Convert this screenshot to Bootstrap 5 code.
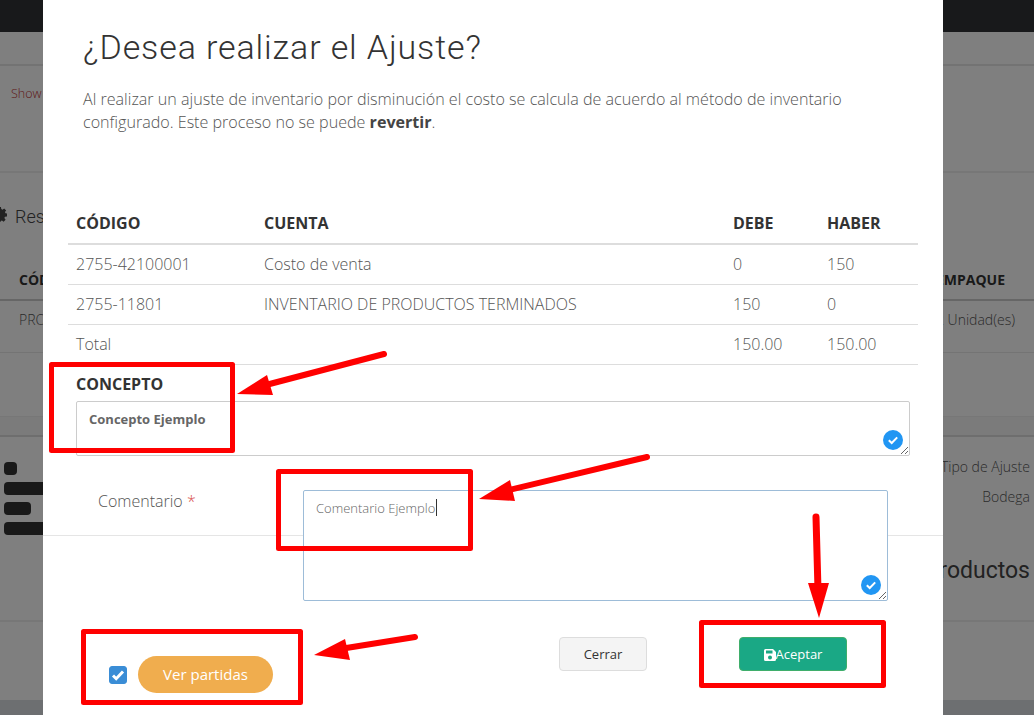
<!DOCTYPE html>
<html lang="es">
<head>
<meta charset="utf-8">
<title>Ajuste</title>
<link href="https://cdn.jsdelivr.net/npm/bootstrap@5.3.0/dist/css/bootstrap.min.css" rel="stylesheet">
<style>
html,body{height:715px;overflow:hidden}
body{font-family:"Open Sans",sans-serif;background:#fff;color:#555;font-weight:300}
.bar-top{height:32px;background:#303236}
.zone{border-bottom:1px solid #eee;padding-left:19px;padding-right:4px}
.zone-a{height:34px;border-bottom-color:#e6e6e6;border-bottom-width:2px}
.zone-b{height:107px;padding-top:19px;padding-left:11px;color:#c03030;font-size:12.5px;font-weight:300;border-bottom:2px solid #eee}
.zone-c{height:92px;padding-top:30px;padding-left:15px;font-family:Roboto,sans-serif;font-size:18px;color:#444;border:0;position:relative}
.zone-d{height:36px;font-weight:700;font-size:14px;line-height:16px;color:#333;border-bottom:2px solid #ccc;padding-top:7px;padding-right:29px}
.zone-e{height:52px;font-size:14px;padding-top:8px;padding-right:19px;color:#555;border-bottom:1px solid #e8e8e8}
.zone-f{height:64px;border-bottom:1px solid #eee}
.zone-g{height:20px;background:#f7f7f7;border-bottom:2px solid #ddd}
.zone-h{height:185px;padding:0 4px;border-bottom:2px solid #eee;color:#555;font-size:14px}
.zone-i{height:78px;border:0}
.zone-j{height:15px;background:#dadee2}
.blot-stack{gap:7px;padding-top:25px}
.blot{height:13px;background:#333;border-radius:4px}
.blot-a{width:13px}.blot-b{width:60px}.blot-c{width:27px}
.big-word{font-family:Roboto,sans-serif;font-size:23px;font-weight:400;color:#444;text-align:right;padding-top:44px;line-height:30px}
.side-right{text-align:right;line-height:30px;margin-top:-1px}
.gear{position:absolute;left:-8px;top:34px}

.modal.sheet{overflow:hidden}
.sheet .modal-dialog{width:900px;max-width:900px;margin:0 0 0 43px}
.sheet .modal-content{border:0;border-radius:0;height:715px;padding-top:25px;overflow:hidden}
.title-block{padding:0 40px}
.sheet-title{font-family:Roboto,sans-serif;font-weight:300;font-size:34px;line-height:44px;letter-spacing:.88px;color:#333;margin:0 0 19px}
.sheet-lead{font-size:16.1px;line-height:23px;margin:0;color:#555;font-weight:300}
.sheet-lead b{font-weight:700;color:#444}
.grid-wrap{padding:0 25px;margin-top:69px}
.ledger{margin:0;width:850px;table-layout:fixed;font-size:16px;color:#555;--bs-table-color:#555}
.ledger th{font-weight:700;color:#333;border-bottom:2px solid #ddd;padding:8px;line-height:24px;height:40px}
.ledger td{padding:8px;line-height:23px;border-bottom:1px solid #ddd;font-weight:300;height:40px}
.concept-block{padding:9px 33px 0}
.concept-label{font-weight:700;font-size:16px;line-height:20px;color:#333;margin-bottom:7px}
.field{position:relative}
.field textarea{display:block;width:100%;border:1px solid #ccc;border-radius:2px;outline:0;font-family:"Open Sans",sans-serif;color:#666;font-size:13px;padding:8px 12px}
.concept-box{height:55px;font-weight:700}
.comment-row{height:80px;border-bottom:1px solid #e5e5e5;display:flex;padding-top:34px;margin-top:0}
.comment-label{width:260px;padding:1px 0 0 55px;font-size:16px;line-height:20px;color:#555;font-weight:300}
.comment-label span{color:#d9534f}
.comment-field{width:585px;height:111px;flex:none}
.comment-box{height:111px;border-color:#9dbcd8!important;color:#666!important;font-weight:300}
.tick{position:absolute;right:7px;bottom:6px}
.caret-mark{position:absolute;left:133px;top:9px;width:1px;height:17px;background:#333}
.action-row{display:flex;align-items:flex-start;padding:101px 0 0 66px}
.check-box.form-check-input{width:18px;height:18px;margin:29px 11px 0 0;background-color:#3a8dd6;border-color:#3a8dd6;border-radius:3px;background-size:14px;background-image:url("data:image/svg+xml,%3Csvg xmlns='http://www.w3.org/2000/svg' viewBox='0 0 14 14'%3E%3Cpath d='M2 7.500l3.200 3.200L12 3.500' fill='none' stroke='%23fff' stroke-width='3'/%3E%3C/svg%3E")}
.pill-btn{width:135px;height:37px;margin-top:19px;background:#f0ad4e;border:0;border-radius:19px;color:#fff;font-size:15px;font-weight:400;padding:0}
.close-btn{width:88px;height:34px;margin-left:286px;background:#f4f4f4;border:1px solid #ddd;border-radius:4px;color:#333;font-size:13px;font-weight:400;padding:1px 0 0}
.save-btn{width:108px;height:34px;margin-left:92px;background:#1aa885;border:1px solid #3fae6b;border-radius:4px;color:#fff;font-size:13px;font-weight:400;padding:1px 0 0;display:flex;align-items:center;justify-content:center}
.notes{position:fixed;left:0;top:0;z-index:1060;pointer-events:none}
</style>
</head>
<body>
<div class="bar-top"></div>
<div class="zone zone-a"></div>
<div class="zone zone-b">Show</div>
<div class="zone zone-c">
  <svg class="gear" width="15" height="15" viewBox="0 0 16 16" fill="#444"><path d="M6.500 0h3l.4 2.200 1.300.6L13 1.500l2.100 2.100-1.300 1.800.6 1.300L16 7v3l-2.200.4-.6 1.300 1.300 1.800-2.100 2.100-1.800-1.300-1.300.6L9 16H6l-.4-2.100-1.300-.6-1.800 1.300L.4 12.500l1.300-1.800-.6-1.300L-1 9V6l2.100-.4.600-1.300L.4 2.500 2.500.4l1.800 1.300 1.300-.6z"/></svg>
  Resumen
</div>
<div class="zone zone-d d-flex justify-content-between"><span>CÓDIGO</span><span>EMPAQUE</span></div>
<div class="zone zone-e d-flex justify-content-between"><span>PRODUCTO</span><span>2 Unidad(es)</span></div>
<div class="zone zone-f"></div>
<div class="zone zone-g"></div>
<div class="zone zone-h d-flex justify-content-between">
  <div class="d-flex flex-column blot-stack">
    <div class="blot blot-a"></div><div class="blot blot-b"></div><div class="blot blot-c"></div><div class="blot blot-b"></div>
  </div>
  <div>
    <div class="side-right pt-3">Tipo de Ajuste<br>Bodega</div>
    <div class="big-word">Productos</div>
  </div>
</div>
<div class="zone zone-i"></div>
<div class="zone-j"></div>

<div class="modal-backdrop fade show"></div>
<div class="modal fade show d-block sheet" tabindex="-1" role="dialog">
  <div class="modal-dialog">
    <div class="modal-content">
      <div class="title-block">
        <h1 class="sheet-title">¿Desea realizar el Ajuste?</h1>
        <p class="sheet-lead">Al realizar un ajuste de inventario por disminución el costo se calcula de acuerdo al método de inventario configurado. Este proceso no se puede <b>revertir</b>.</p>
      </div>
      <div class="grid-wrap">
        <table class="table ledger">
          <colgroup><col style="width:188px"><col style="width:469px"><col style="width:94px"><col style="width:99px"></colgroup>
          <thead><tr><th>CÓDIGO</th><th>CUENTA</th><th>DEBE</th><th>HABER</th></tr></thead>
          <tbody>
            <tr><td>2755-42100001</td><td>Costo de venta</td><td>0</td><td>150</td></tr>
            <tr><td>2755-11801</td><td>INVENTARIO DE PRODUCTOS TERMINADOS</td><td>150</td><td>0</td></tr>
            <tr><td>Total</td><td></td><td>150.00</td><td>150.00</td></tr>
          </tbody>
        </table>
      </div>
      <div class="concept-block">
        <div class="concept-label">CONCEPTO</div>
        <div class="field">
          <textarea class="concept-box" aria-label="Concepto">Concepto Ejemplo</textarea>
          <svg class="tick" width="20" height="20" viewBox="0 0 20 20"><circle cx="10" cy="10" r="10" fill="#2196f3"/><path d="M5.800 10.300l2.900 2.700 5.500-5.600" fill="none" stroke="#fff" stroke-width="2"/></svg>
        </div>
      </div>
      <div class="comment-row">
        <div class="comment-label">Comentario <span>*</span></div>
        <div class="field comment-field">
          <textarea class="comment-box" aria-label="Comentario">Comentario Ejemplo</textarea>
          <span class="caret-mark"></span>
          <svg class="tick" width="20" height="20" viewBox="0 0 20 20"><circle cx="10" cy="10" r="10" fill="#2196f3"/><path d="M5.800 10.300l2.900 2.700 5.500-5.600" fill="none" stroke="#fff" stroke-width="2"/></svg>
        </div>
      </div>
      <div class="action-row">
        <input class="form-check-input check-box" type="checkbox" checked aria-label="Ver partidas">
        <button class="btn pill-btn" type="button">Ver partidas</button>
        <button class="btn close-btn" type="button">Cerrar</button>
        <button class="btn save-btn" type="button"><svg width="12" height="12" viewBox="0 0 12 12" fill="#fff"><path d="M1.500 0H9l3 3v7.500A1.500 1.500 0 0 1 10.500 12h-9A1.500 1.500 0 0 1 0 10.500v-9A1.500 1.500 0 0 1 1.500 0zM2 1.500V4.500h6.500V1.500zM6 6.500a2 2 0 1 0 0 4 2 2 0 0 0 0-4z" fill-rule="evenodd"/></svg>Aceptar</button>
      </div>
    </div>
  </div>
</div>

<svg class="notes" width="1034" height="715" viewBox="0 0 1034 715">
  <g fill="none" stroke="#f00" stroke-width="5" stroke-linejoin="round">
    <rect x="51.500" y="364.500" width="181" height="86"/>
    <rect x="278.500" y="471.500" width="192" height="77"/>
    <rect x="83.500" y="631.500" width="217" height="71"/>
    <rect x="701.500" y="622.500" width="182" height="63"/>
  </g>
  <g stroke="#f00" stroke-width="6" stroke-linecap="round">
    <path d="M384 354L262 386"/>
    <path d="M647 457L505 491"/>
    <path d="M816 517L818 590" stroke-width="7"/>
    <path d="M415 637L340 649" stroke-width="6"/>
  </g>
  <g fill="#f00">
    <path d="M237 394L267 375L273 395Z"/>
    <path d="M479 499L510 480L515 501Z"/>
    <path d="M808 583L829 583L819 618Z"/>
    <path d="M314 655L345 639L350 660Z"/>
  </g>
</svg>
<script src="https://cdn.jsdelivr.net/npm/bootstrap@5.3.0/dist/js/bootstrap.bundle.min.js"></script>
</body>
</html>
